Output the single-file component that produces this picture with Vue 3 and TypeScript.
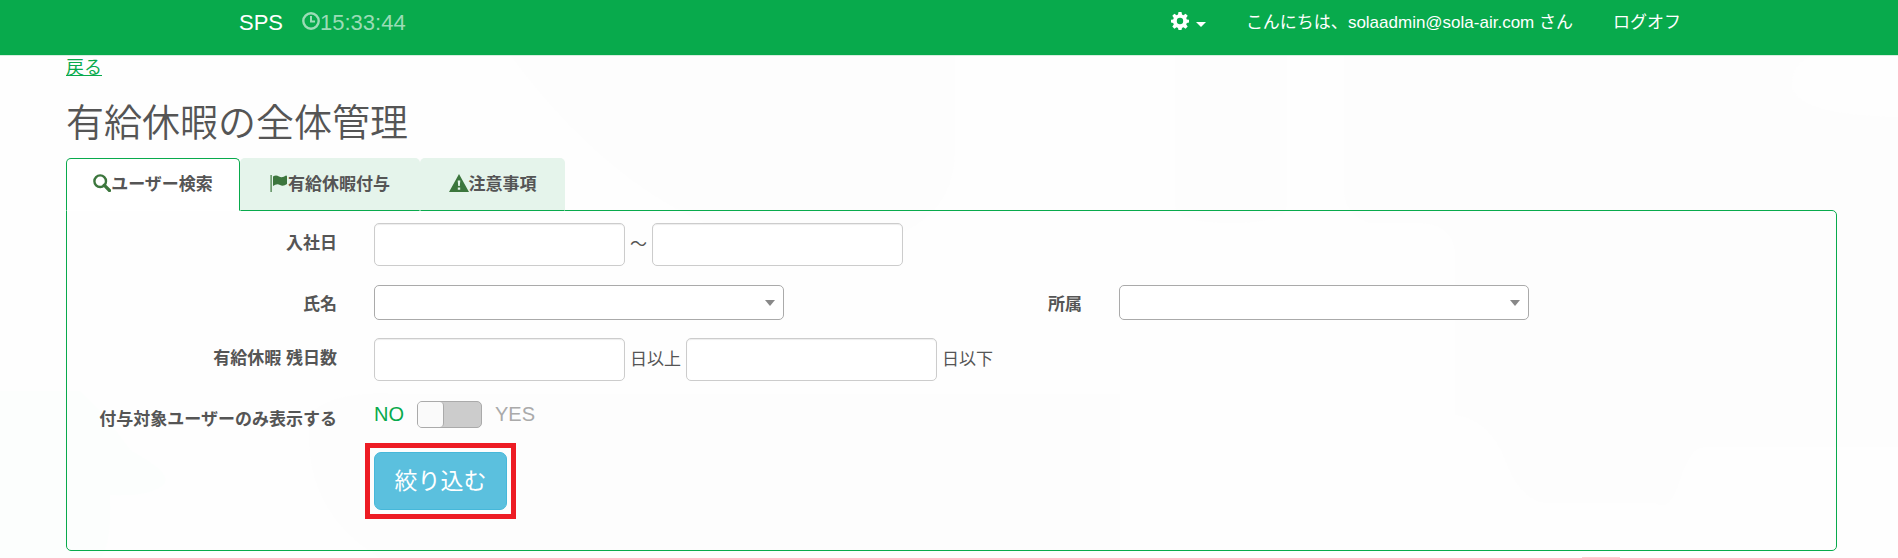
<script setup lang="ts">
import { ref } from 'vue'

type TabId = 'search' | 'grant' | 'notes'

interface Tab {
  id: TabId
  label: string
}

const tabs: Tab[] = [
  { id: 'search', label: 'ユーザー検索' },
  { id: 'grant', label: '有給休暇付与' },
  { id: 'notes', label: '注意事項' },
]

const activeTab = ref<TabId>('search')
const hiredFrom = ref('')
const hiredTo = ref('')
const userName = ref('')
const department = ref('')
const daysMin = ref('')
const daysMax = ref('')
const targetOnly = ref(false)
</script>

<template>
  <div class="page">
    <svg class="backdrop" viewBox="0 0 1898 558" preserveAspectRatio="none" aria-hidden="true">
      <path class="mist" d="M510 55H955V150Q955 250 800 250Q640 230 510 55Z" />
      <path class="mist" d="M1175 55h112v150q0 18-56 18t-56-18Z" />
      <path class="mist" d="M1344 55H1898V447H1705Q1690 447 1680 480T1655 503H1545Q1520 500 1505 460T1455 415V250Q1450 224 1420 223H1370Q1344 215 1344 190Z" />
      <path class="clear" d="M1898 55H1815Q1790 62 1792 88Q1800 115 1898 117Z" />
      <path class="mist" d="M310 415Q330 390 400 394H1120V558H380Q300 510 310 415Z" />
      <path class="mint" d="M0 391H80Q105 415 130 450Q175 475 163 485Q150 497 110 495Q112 545 100 558H0Z" />
      <rect class="blush" x="1582" y="557" width="38" height="1" />
    </svg>

    <header class="navbar">
      <div class="nav-inner">
        <a class="brand" href="#">SPS</a>
        <span class="clock">
          <svg class="clock-icon" viewBox="0 0 18 18" aria-hidden="true">
            <circle cx="9" cy="9" r="7.700" fill="none" stroke="currentColor" stroke-width="2.400" />
            <path d="M8 4h2v4.500h3v2H8Z" fill="currentColor" />
          </svg>
          <time>15:33:44</time>
        </span>
        <nav class="nav-right">
          <button class="settings" type="button" aria-label="設定">
            <svg class="gear" viewBox="0 0 18 18" aria-hidden="true">
              <path
                fill="currentColor"
                fill-rule="evenodd"
                d="M7.5 0h3l.5 2.6 1.4.6 2.2-1.5 2.1 2.1-1.5 2.2.6 1.4 2.2.4v2.8l-2.2.5-.6 1.4 1.5 2.1-2.1 2.1-2.2-1.4-1.4.6-.5 2.1h-3L7 15.9l-1.4-.6-2.2 1.4-2.1-2.1 1.5-2.1-.6-1.4L0 10.600V7.800l2.200-.4.6-1.400L1.300 3.800l2.100-2.100 2.200 1.500L7 2.600ZM9 5.800a3.200 3.200 0 1 0 0 6.400a3.200 3.200 0 0 0 0-6.400Z"
              />
            </svg>
            <span class="caret"></span>
          </button>
          <a class="nav-link" href="#">こんにちは、<span>solaadmin@sola-air.com</span> さん</a>
          <a class="nav-link" href="#">ログオフ</a>
        </nav>
      </div>
    </header>

    <main class="content">
      <a class="back" href="#">戻る</a>
      <h1>有給休暇の全体管理</h1>

      <div class="tabs" role="tablist">
        <button
          v-for="tab in tabs"
          :id="`tab-${tab.id}`"
          :key="tab.id"
          type="button"
          role="tab"
          class="tab"
          :class="[tab.id, { active: activeTab === tab.id }]"
          :aria-selected="activeTab === tab.id"
          @click="activeTab = tab.id"
        >
          <svg v-if="tab.id === 'search'" class="icon" viewBox="0 0 18 18" aria-hidden="true">
            <circle cx="7.200" cy="7.200" r="5.800" fill="none" stroke="currentColor" stroke-width="2.400" />
            <path d="M11.200 11.200L16.500 16.500" stroke="currentColor" stroke-width="3.200" stroke-linecap="round" />
          </svg>
          <svg v-else-if="tab.id === 'grant'" class="icon" viewBox="0 0 18 18" aria-hidden="true">
            <rect x="0.500" y="1" width="1.200" height="17" fill="currentColor" />
            <path d="M3 2.500q3-2 6 0t7-1q1 0 1 1v7.500q-4 3-7 1t-7 1Z" fill="currentColor" />
          </svg>
          <svg v-else class="icon wide" viewBox="0 0 20 18" aria-hidden="true">
            <path
              fill="currentColor"
              fill-rule="evenodd"
              d="M10 0L20 18H0ZM8.700 6.500L9.200 12h1.600l.5-5.500ZM8.800 13.500v2.300h2.400v-2.300Z"
            />
          </svg>
          <span>{{ tab.label }}</span>
        </button>
      </div>

      <form class="panel" role="tabpanel" aria-labelledby="tab-search" @submit.prevent>
        <div class="row tall">
          <label class="label" for="hired-from">入社日</label>
          <div class="fields">
            <input id="hired-from" v-model="hiredFrom" class="text" type="text" />
            <span>～</span>
            <input v-model="hiredTo" class="text" type="text" aria-label="入社日（終了）" />
          </div>
        </div>

        <div class="row split">
          <label class="label" for="user-name">氏名</label>
          <div class="fields">
            <span class="picker">
              <select id="user-name" v-model="userName"><option value=""></option></select>
            </span>
          </div>
          <label class="label" for="department">所属</label>
          <div class="fields">
            <span class="picker">
              <select id="department" v-model="department"><option value=""></option></select>
            </span>
          </div>
        </div>

        <div class="row tall">
          <label class="label" for="days-min">有給休暇 残日数</label>
          <div class="fields">
            <input id="days-min" v-model="daysMin" class="text" type="text" />
            <label for="days-min">日以上</label>
            <input id="days-max" v-model="daysMax" class="text" type="text" />
            <label for="days-max">日以下</label>
          </div>
        </div>

        <div class="row">
          <label class="label" for="target-only">付与対象ユーザーのみ表示する</label>
          <div class="fields switch-group">
            <span class="choice" :class="{ on: !targetOnly }">NO</span>
            <input id="target-only" v-model="targetOnly" class="switch" type="checkbox" role="switch" />
            <span class="choice" :class="{ on: targetOnly }">YES</span>
          </div>
        </div>

        <div class="row">
          <div class="fields submit-field">
            <span class="highlight"><button class="submit" type="submit">絞り込む</button></span>
          </div>
        </div>
      </form>
    </main>
  </div>
</template>

<style>
body {
  margin: 0;
  background: #fefefe;
}
</style>

<style scoped>
.page {
  --green: #08aa4c;
  position: relative;
  min-height: 100vh;
  overflow: hidden;
  color: #555;
  font-family: 'Liberation Sans', 'Noto Sans CJK JP', sans-serif;
  font-size: 17px;
  line-height: 25px;
}

.page *,
.page *::before,
.page *::after {
  box-sizing: border-box;
}

.backdrop {
  position: absolute;
  inset: 0;
  width: 100%;
  height: 100%;
}

.mist { fill: #fdfdfd; }
.clear { fill: #fefefe; }
.mint { fill: #fcfefd; }
.blush { fill: #ffd0d2; }

.navbar {
  position: relative;
  background: var(--green);
  color: #fff;
  border-bottom: 1px solid #d5eedf;
}

.nav-inner {
  display: flex;
  align-items: flex-start;
  max-width: 1464px;
  height: 55px;
  margin: 0 auto;
  padding-top: 10px;
}

.brand {
  margin-left: 22px;
  font-size: 22px;
  color: #fff;
  text-decoration: none;
}

.clock {
  display: flex;
  align-items: flex-start;
  margin-left: 19px;
  font-size: 22px;
  color: #9bdcb6;
}

.clock-icon {
  width: 18px;
  height: 18px;
  margin-top: 2px;
}

.nav-right {
  display: flex;
  align-items: flex-start;
  gap: 40px;
  margin-left: auto;
}

.settings {
  display: flex;
  align-items: center;
  gap: 7px;
  padding: 2px 0;
  border: 0;
  background: none;
  color: #fff;
}

.gear {
  width: 18px;
  height: 18px;
}

.caret {
  margin-top: 6px;
  border: 5px solid transparent;
  border-top-color: #fff;
  border-bottom: 0;
}

.nav-link {
  color: #fff;
  text-decoration: none;
}

.content {
  position: relative;
  padding: 0 61px 7px 66px;
}

.back {
  display: inline-block;
  font-size: 18px;
  color: var(--green);
}

h1 {
  margin: 21px 0 14px;
  font-size: 38px;
  font-weight: 350;
  line-height: 42px;
}

.tabs {
  display: flex;
  margin-bottom: -1px;
}

.tab {
  position: relative;
  display: flex;
  align-items: center;
  justify-content: center;
  height: 53px;
  padding: 0 0 1px;
  border: 1px solid transparent;
  border-bottom-color: var(--green);
  border-radius: 5px 5px 0 0;
  background: #e5f4eb;
  color: #555;
  font: inherit;
  font-weight: 700;
  cursor: pointer;
}

.tab.search { width: 174px; }
.tab.grant { width: 180px; }
.tab.notes { width: 145px; }

.tab.active {
  z-index: 1;
  border-color: var(--green);
  border-bottom-color: #fff;
  background: #fff;
}

.icon {
  width: 18px;
  height: 18px;
  margin-bottom: 3px;
  color: #3c763d;
}

.icon.wide {
  width: 20px;
}

.panel {
  padding: 12px 0 40px;
  border: 1px solid var(--green);
  border-radius: 0 5px 5px 5px;
}

.row {
  display: grid;
  grid-template-columns: 289fr 1480fr;
  align-items: start;
  margin-bottom: 12px;
}

.row.split {
  grid-template-columns: 289fr 596fr 149fr 735fr;
  margin-bottom: 13px;
}

.row.split .fields {
  padding-top: 1px;
}

.row.tall {
  margin-bottom: 18px;
}

.row:last-child {
  margin-bottom: 0;
}

.label {
  padding: 8px 19px 8px 0;
  font-weight: 700;
  text-align: right;
}

.fields {
  display: flex;
  align-items: center;
  gap: 5px;
  padding-left: 18px;
}

.text {
  width: 251px;
  height: 43px;
  padding: 7px 15px;
  border: 1px solid #ccc;
  border-radius: 5px;
  background: #fff;
  box-shadow: inset 0 1px 1px rgba(0, 0, 0, 0.075);
  color: #555;
  font: inherit;
}

.picker {
  position: relative;
  width: 410px;
}

.picker::after {
  content: '';
  position: absolute;
  top: 15px;
  right: 9px;
  border: 5px solid transparent;
  border-top: 6px solid #888;
  border-bottom: 0;
  pointer-events: none;
}

.picker select {
  display: block;
  width: 100%;
  height: 35px;
  padding: 0 25px 0 10px;
  border: 1px solid #aaa;
  border-radius: 5px;
  background: #fff;
  color: #444;
  font: inherit;
  appearance: none;
}

.fields.switch-group {
  gap: 13px;
  padding-top: 2px;
}

.choice {
  font-size: 20px;
  color: #aaa;
}

.choice.on {
  color: var(--green);
}

.switch {
  width: 65px;
  height: 27px;
  margin: 0;
  border: 1px solid #aaa;
  border-radius: 5px;
  background: #ccc;
  appearance: none;
  cursor: pointer;
}

.switch::before {
  content: '';
  display: block;
  width: 26px;
  height: 25px;
  border-right: 1px solid #aaa;
  border-radius: 4px;
  background: #fafafa;
}

.switch:checked::before {
  margin-left: auto;
}

.submit-field {
  grid-column: 2;
}

.highlight {
  outline: 5px solid #ed1c24;
  outline-offset: 4px;
}

.submit {
  display: block;
  width: 133px;
  height: 58px;
  padding: 0;
  border: 1px solid #46b8da;
  border-radius: 7px;
  background: #5bc0de;
  color: #fff;
  font: inherit;
  font-size: 23px;
  cursor: pointer;
}
</style>
